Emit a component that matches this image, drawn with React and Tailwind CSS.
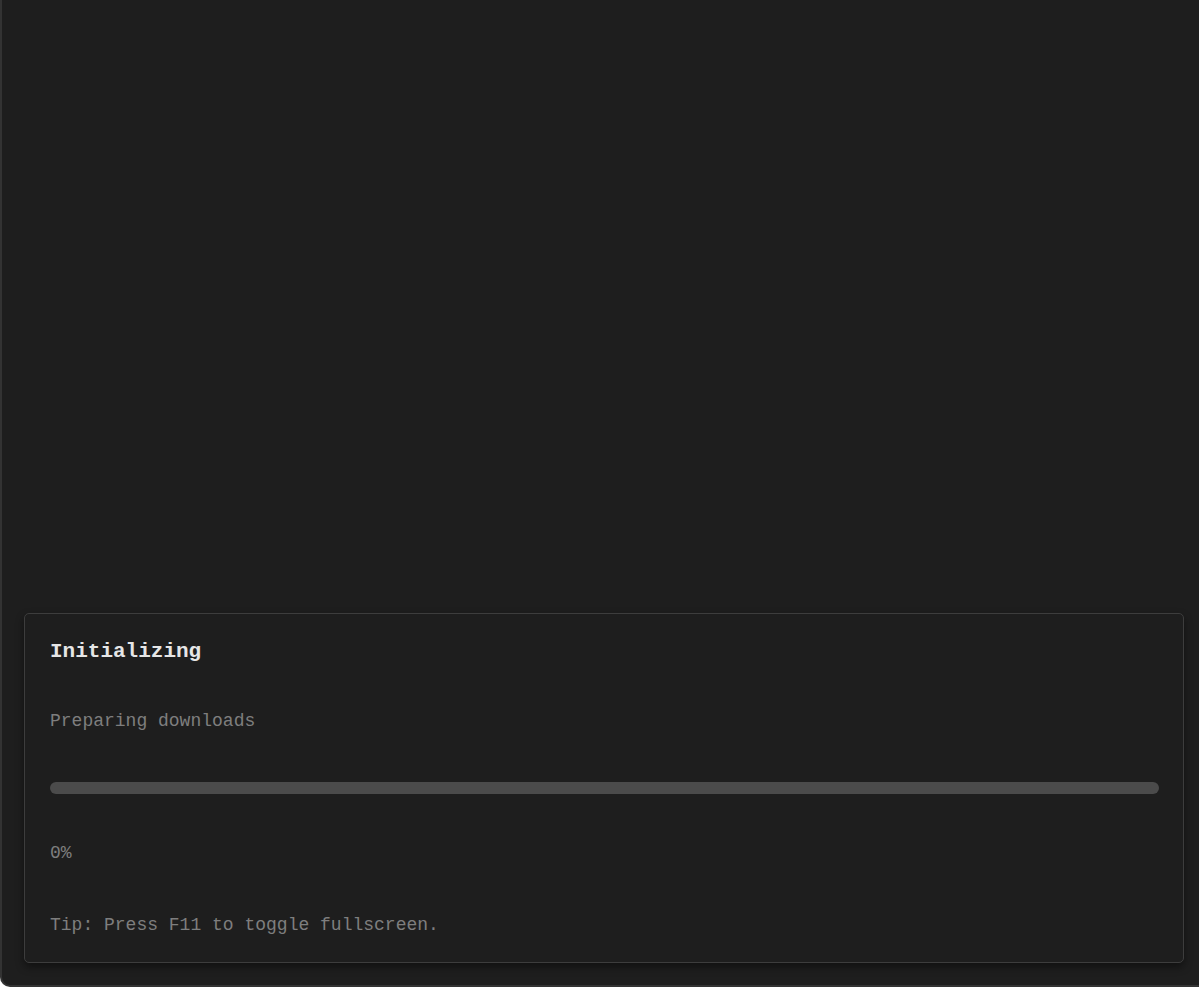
import React from 'react';

export default function App() {
  return (
    <div className="h-[987px] w-full overflow-hidden bg-[#1e1e1e] border-l-2 border-b-2 border-[#333333] rounded-bl-[10px] flex flex-col justify-end pb-[22px]">
      <div
        className="ml-[22px] mr-[15px] border border-[#3d3d3d] rounded-[5px] bg-[#1e1e1e] shadow-[0_4px_8px_rgba(0,0,0,0.45)] pl-[25px] pr-[24px] pt-[24px] pb-[23px]"
        style={{ fontFamily: '"Liberation Mono", "Courier New", monospace' }}
      >
        <h1 className="text-[21px] leading-[28px] font-bold text-[#e6e6e6]">Initializing</h1>
        <p className="mt-[41px] text-[18px] leading-[28px] text-[#7e7e7e]">Preparing downloads</p>
        <div className="mt-[47px] h-3 w-full rounded-full bg-[#4b4b4b]">
          <div className="h-3 rounded-full bg-[#6a6a6a]" style={{ width: '0%' }} />
        </div>
        <p className="mt-[45px] text-[18px] leading-[28px] text-[#7e7e7e]">0%</p>
        <p className="mt-[44px] text-[18px] leading-[28px] text-[#7e7e7e]">Tip: Press F11 to toggle fullscreen.</p>
      </div>
    </div>
  );
}
